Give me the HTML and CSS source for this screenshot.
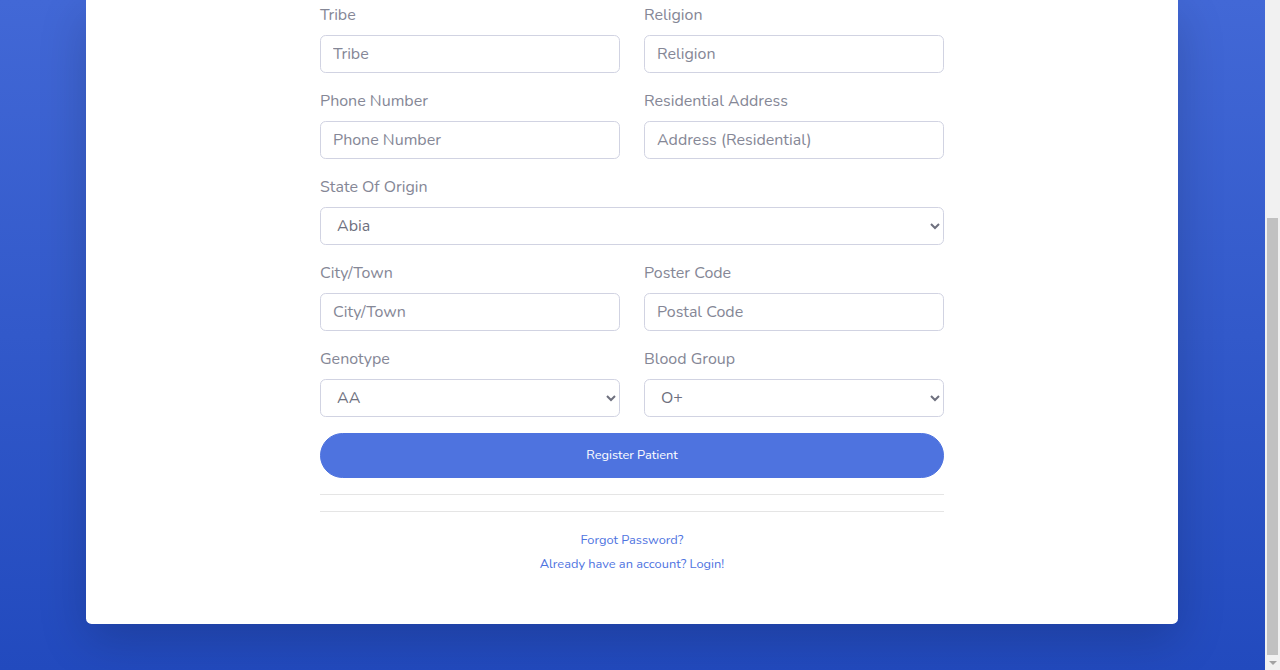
FILE: index.html
```html
<!DOCTYPE html>
<html lang="en">
<head>
<meta charset="utf-8">
<title>Register Patient</title>
<link rel="stylesheet" href="styles.css">
</head>
<body class="page">
<main class="viewport">
  <div class="card">
    <form class="form">
      <div class="grid">
        <div class="group">
          <label class="label">Tribe</label>
          <input class="control" type="text" placeholder="Tribe">
        </div>
        <div class="group">
          <label class="label">Religion</label>
          <input class="control" type="text" placeholder="Religion">
        </div>
        <div class="group">
          <label class="label">Phone Number</label>
          <input class="control" type="text" placeholder="Phone Number">
        </div>
        <div class="group">
          <label class="label">Residential Address</label>
          <input class="control" type="text" placeholder="Address (Residential)">
        </div>
        <div class="group span-2">
          <label class="label">State Of Origin</label>
          <select class="control">
            <option>Abia</option>
            <option>Adamawa</option>
            <option>Akwa Ibom</option>
          </select>
        </div>
        <div class="group">
          <label class="label">City/Town</label>
          <input class="control" type="text" placeholder="City/Town">
        </div>
        <div class="group">
          <label class="label">Poster Code</label>
          <input class="control" type="text" placeholder="Postal Code">
        </div>
        <div class="group">
          <label class="label">Genotype</label>
          <select class="control">
            <option>AA</option>
            <option>AS</option>
            <option>SS</option>
          </select>
        </div>
        <div class="group">
          <label class="label">Blood Group</label>
          <select class="control">
            <option>O+</option>
            <option>O-</option>
            <option>A+</option>
          </select>
        </div>
      </div>
      <button class="btn-user" type="button">Register Patient</button>
      <hr class="rule">
    </form>
    <div class="footer">
      <hr class="rule">
      <div class="link-row"><a class="small-link" href="#">Forgot Password?</a></div>
      <div class="link-row"><a class="small-link" href="#">Already have an account? Login!</a></div>
    </div>
  </div>
</main>
<div class="scrollbar">
  <div class="scroll-thumb"></div>
  <div class="scroll-arrow"></div>
</div>
</body>
</html>
```

FILE: styles.css
```css
.page {
  margin: 0;
  height: 670px;
  overflow: hidden;
  display: flex;
  font-family: "Nunito", Roboto, "Liberation Sans", sans-serif;
  font-size: 16px;
  line-height: 1.5;
  color: #858796;
}
.viewport {
  flex: 1;
  height: 670px;
  display: flex;
  justify-content: flex-start;
  align-items: flex-start;
  padding-left: 86px;
  background: linear-gradient(180deg, #4268d6 0%, #224abe 100%);
}
.card {
  width: 1092px;
  box-sizing: border-box;
  padding: 3px 0 48px;
  background: #fff;
  border-radius: 0 0 5.6px 5.6px;
  box-shadow: 0 16px 48px rgba(0, 0, 0, 0.175);
}
.form,
.footer {
  width: 624px;
  margin: 0 auto;
}
.grid {
  display: grid;
  grid-template-columns: 300px 300px;
  column-gap: 24px;
}
.span-2 {
  grid-column: 1 / 3;
}
.group {
  margin-bottom: 16px;
}
.label {
  display: block;
  margin-bottom: 8px;
  line-height: 24px;
}
.control {
  display: block;
  box-sizing: border-box;
  width: 100%;
  height: 38px;
  padding: 6px 12px;
  font-family: inherit;
  font-size: 16px;
  line-height: 24px;
  color: #6e707e;
  background: #fff;
  border: 1px solid #d1d3e2;
  border-radius: 5.6px;
  outline: none;
}
.control::placeholder {
  color: #858796;
  opacity: 1;
}
.btn-user {
  display: block;
  box-sizing: border-box;
  width: 100%;
  height: 45px;
  padding: 12px 16px;
  font-family: inherit;
  font-size: 12.8px;
  line-height: 19px;
  color: #fff;
  background: #4e73df;
  border: 1px solid #4e73df;
  border-radius: 160px;
  cursor: pointer;
}
.rule {
  margin: 16px 0 0;
  border: 0;
  border-top: 1px solid rgba(0, 0, 0, 0.1);
  height: 0;
}
.footer .rule {
  margin: 16px 0;
}
.link-row {
  text-align: center;
  font-size: 12.8px;
  line-height: 24px;
  height: 24px;
}
.small-link {
  color: #4e73df;
  text-decoration: none;
}
.scrollbar {
  width: 15px;
  height: 670px;
  background: #f1f1f1;
  display: flex;
  flex-direction: column;
  align-items: center;
  padding-top: 218px;
  box-sizing: border-box;
}
.scroll-thumb {
  width: 11px;
  height: 437px;
  background: #c1c1c1;
}
.scroll-arrow {
  margin-top: 6px;
  width: 0;
  height: 0;
  border-left: 4px solid transparent;
  border-right: 4px solid transparent;
  border-top: 4px solid #a3a3a3;
}
```
